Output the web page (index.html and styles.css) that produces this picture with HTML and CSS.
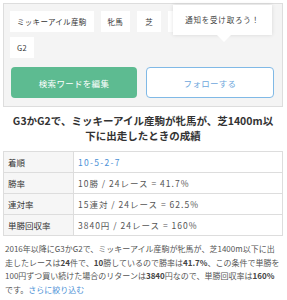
FILE: index.html
```html
<!DOCTYPE html>
<html>
  <head>
    <meta charset="utf-8">
    <link rel="stylesheet" href="styles.css">
    <title>成績</title>
  </head>
  <body>
    <div id="div_main">

      <div id="div_searchPanel">
        <div class="tags">
          <span class="tag">ミッキーアイル産駒</span>
          <span class="tag">牝馬</span>
          <span class="tag">芝</span>
          <span class="tag">1400m以下</span>
          <span class="tag">G3</span>
          <span class="tag">G2</span>
        </div>
        <div class="tooltip">通知を受け取ろう！</div>
        <div class="actions">
          <button class="btn btn_edit">検索ワードを編集</button>
          <button class="btn btn_follow">フォローする</button>
        </div>
      </div>

      <h2 class="result_title">G3かG2で、ミッキーアイル産駒が牝馬が、芝1400m以下に出走したときの成績</h2>

      <table id="table_stats">
        <tr>
          <th>着順</th><td class="rank">10-5-2-7</td>
        </tr>
        <tr>
          <th>勝率</th><td>10勝 / 24レース = 41.7%</td>
        </tr>
        <tr>
          <th>連対率</th><td>15連対 / 24レース = 62.5%</td>
        </tr>
        <tr>
          <th>単勝回収率</th><td>3840円 / 24レース = 160%</td>
        </tr>
      </table>

      <p class="summary">2016年以降にG3かG2で、ミッキーアイル産駒が牝馬が、芝1400m以下に出走したレースは<b>24</b>件で、<b>10</b>勝しているので勝率は<b>41.7%</b>、この条件で単勝を100円ずつ買い続けた場合のリターンは<b>3840</b>円なので、単勝回収率は<b>160%</b>です。<a href="#">さらに絞り込む</a></p>

    </div>
  </body>
</html>
```

FILE: styles.css
```css
body {
  margin: 0;
  background-color: #ffffff;
  color: #333333;
  font-family: "Noto Sans CJK JP", "Noto Sans", sans-serif;
}

#div_main {
  padding: 3px 4px 0 3px;
}

#div_searchPanel {
  position: relative;
  background-color: #f4f4f4;
  border: 1px solid #dddddd;
  padding: 7px 8px 8px 6px;
}

.tags {
  display: flex;
  flex-wrap: wrap;
  gap: 5px 7px;
  padding-right: 20px;
}

.tag {
  display: inline-block;
  background-color: #ffffff;
  height: 21px;
  line-height: 21px;
  min-width: 24px;
  padding: 0 7px;
  box-sizing: border-box;
  text-align: center;
  font-size: 7.5px;
  letter-spacing: 0.3px;
  color: #333333;
}

.tooltip {
  position: absolute;
  left: 169px;
  top: 1px;
  width: 99px;
  height: 30px;
  line-height: 30px;
  background-color: #ffffff;
  box-shadow: 0 0 4px rgba(0, 0, 0, 0.12);
  text-align: center;
  font-size: 7.5px;
  letter-spacing: 0.8px;
  color: #444444;
}

.tooltip::after {
  content: "";
  position: absolute;
  left: 44px;
  bottom: -7px;
  border-left: 7px solid transparent;
  border-right: 7px solid transparent;
  border-top: 7px solid #ffffff;
}

.actions {
  display: flex;
  gap: 9px;
  margin-top: 9px;
  padding-left: 1px;
}

.btn {
  flex: 1;
  height: 31px;
  border-radius: 4px;
  font-family: inherit;
  font-size: 8.5px;
  letter-spacing: 0.3px;
  box-sizing: border-box;
}

.btn_edit {
  background-color: #5dbb91;
  border: none;
  color: #ffffff;
}

.btn_follow {
  background-color: #ffffff;
  border: 1px solid #80b9e6;
  color: #6ea7dc;
}

.result_title {
  margin: 6px 0 8px 0;
  padding: 0 6px;
  font-size: 10.5px;
  line-height: 15px;
  text-align: center;
  color: #333333;
}

#table_stats {
  width: 100%;
  border-collapse: collapse;
  font-size: 8.5px;
}

#table_stats th, #table_stats td {
  border: 1px solid #dddddd;
  height: 20px;
  padding: 0 4px;
  text-align: left;
  white-space: nowrap;
}

#table_stats th {
  width: 61px;
  background-color: #f6f6f6;
  font-weight: normal;
  color: #333333;
}

#table_stats td {
  color: #555555;
  letter-spacing: 1px;
}

#table_stats td.rank {
  color: #4a8fd6;
  letter-spacing: 1.3px;
}

.summary {
  margin: 6px 0 0 0;
  padding: 0 3px 0 2px;
  font-size: 8px;
  line-height: 13.6px;
  color: #555555;
}

.summary b {
  color: #444444;
}

.summary a {
  color: #4a8fd6;
  text-decoration: none;
}
```
